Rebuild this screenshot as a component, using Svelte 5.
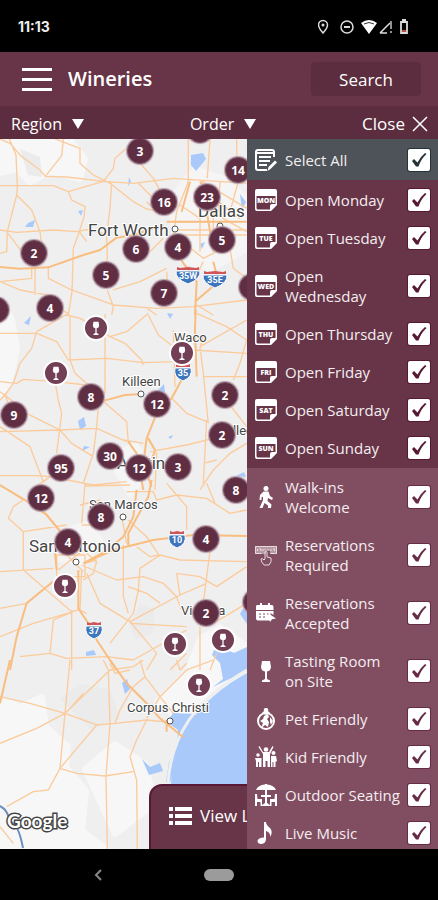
<script>
  const days = [
    { label: 'Open Monday', day: 'MON' },
    { label: 'Open Tuesday', day: 'TUE' },
    { label: 'Open Wednesday', day: 'WED' },
    { label: 'Open Thursday', day: 'THU' },
    { label: 'Open Friday', day: 'FRI' },
    { label: 'Open Saturday', day: 'SAT' },
    { label: 'Open Sunday', day: 'SUN' }
  ];

  const features = [
    { label: 'Walk-ins Welcome', icon: 'walk' },
    { label: 'Reservations Required', icon: 'tap' },
    { label: 'Reservations Accepted', icon: 'booking' },
    { label: 'Tasting Room on Site', icon: 'glass' },
    { label: 'Pet Friendly', icon: 'pet' },
    { label: 'Kid Friendly', icon: 'kids' },
    { label: 'Outdoor Seating', icon: 'outdoor' },
    { label: 'Live Music', icon: 'music' }
  ];

  // Pin positions are measured from the top left of the map
  const clusters = [
    { x: 200, y: -9, n: '' },
    { x: 140, y: 12, n: 3 },
    { x: 238, y: 31, n: 14 },
    { x: 164, y: 63, n: 16 },
    { x: 207, y: 58, n: 23 },
    { x: 34, y: 114, n: 2 },
    { x: 136, y: 110, n: 6 },
    { x: 178, y: 108, n: 4 },
    { x: 222, y: 101, n: 5 },
    { x: 106, y: 136, n: 5 },
    { x: 164, y: 154, n: 7 },
    { x: 252, y: 148, n: '' },
    { x: -4, y: 171, n: '' },
    { x: 50, y: 169, n: 4 },
    { x: 91, y: 258, n: 8 },
    { x: 157, y: 265, n: 12 },
    { x: 225, y: 256, n: 2 },
    { x: 14, y: 276, n: 9 },
    { x: 222, y: 296, n: 2 },
    { x: 110, y: 317, n: 30 },
    { x: 61, y: 329, n: 95 },
    { x: 139, y: 329, n: 12 },
    { x: 178, y: 328, n: 3 },
    { x: 236, y: 351, n: 8 },
    { x: 41, y: 359, n: 12 },
    { x: 101, y: 378, n: 8 },
    { x: 68, y: 403, n: 4 },
    { x: 206, y: 400, n: 4 },
    { x: 206, y: 474, n: 2 },
    { x: 256, y: 463, n: '' }
  ];

  const wineries = [
    { x: 96, y: 189 },
    { x: 56, y: 234 },
    { x: 182, y: 214 },
    { x: 65, y: 447 },
    { x: 175, y: 505 },
    { x: 223, y: 501 },
    { x: 199, y: 546 }
  ];

  const cities = [
    { name: 'Dallas', x: 198, y: 78, big: true },
    { name: 'Fort Worth', x: 88, y: 97, big: true },
    { name: 'Waco', x: 174, y: 203 },
    { name: 'Killeen', x: 122, y: 247 },
    { name: 'College Station', x: 217, y: 296 },
    { name: 'Austin', x: 117, y: 330, big: true },
    { name: 'San Marcos', x: 89, y: 370 },
    { name: 'San Antonio', x: 29, y: 413, big: true },
    { name: 'Victoria', x: 181, y: 476 },
    { name: 'Corpus Christi', x: 127, y: 573 }
  ];

  const dots = [[175, 90], [220, 87], [141, 255], [123, 378], [76, 423], [170, 582]];

  const shields = [
    { x: 188, y: 136, n: '35W', wide: true },
    { x: 215, y: 140, n: '35E', wide: true },
    { x: 183, y: 233, n: '35' },
    { x: 177, y: 400, n: '10' },
    { x: 94, y: 491, n: '37' }
  ];

  // The map is drawn in four sheets at three units per pixel
  const sheets = [
    {
      top: -4,
      roads:
        'M28 12 48 60 52 155 50 180 22 290 20 350 0 355 M0 12 30 25 62 62 120 105 136 124 200 126 310 139 M0 152H160L205 170 310 139 M165 12 240 40V85L280 120 330 145 400 200 440 222 460 226 M190 12 185 62 136 124 M205 170 215 195 255 215 252 245 238 290 220 340 216 470 205 540 M380 40 345 70 340 100 310 139 M335 145 330 220 320 300 322 370 318 420 M425 90 460 130 485 175 M310 139 400 145 520 130 740 145 M415 145 460 190 M565 12V140L530 230 520 300 M630 12 622 130 M710 12 712 150 690 230 M50 180 95 225 120 290 125 330 M0 285 50 292 160 285 230 290 260 284 320 297 M105 400V480M95 400V430L0 440 M60 465 170 485 M0 440 60 465 M145 397V430L215 465 340 510 470 520 580 515 740 495 M322 465 340 515 335 540 M340 465 420 440 500 400 M450 350 490 310 M440 200 480 240 M238 290 260 320 M20 290 80 370 100 390 M600 135 740 220 M580 200 740 290 M600 250V350M640 220V320M660 140 655 230 M550 300H740M520 260H700M520 285H740 M540 210 600 250 M690 340 700 400 740 430 M610 380 590 420 M440 520 470 540 M500 410 502 440 M590 510 640 540 M560 330 610 370 690 330',
      major:
        'M0 396 60 401 145 397 250 360 300 345 350 308 400 300 490 270 M500 260H740 M570 140 545 230 M530 300 540 370 590 440 585 540 M640 380 655 440 585 500 M622 240 640 350 M600 140 640 190 720 250'
    },
    {
      top: 171,
      roads:
        'M0 70H110L170 95 205 150 320 145 430 158 520 155 540 80 M110 65 95 115 60 160 40 220 15 255 0 270 M110 65 205 10 M205 10 185 0M210 20V150L225 190 265 225 295 290 290 350 280 430 250 520 M315 12V250M330 80 300 60 240 25 200 15 M330 80 380 65 445 10 M330 80 375 100 425 150 430 165 M445 15 475 75 520 110 580 120 740 130 M520 60 525 230 M610 200H740 M590 10 680 50 740 90 M740 30 600 110 M600 110 610 190 625 340 M610 80 600 115 M0 215 50 220 70 208 165 215 260 225 M15 250 30 300 M165 215 175 270 185 310 170 430 M80 310 140 340 180 360 290 355 380 395 M0 365 180 360 215 400 280 440 M0 350 90 410 130 515 M130 515 150 500 280 525 380 515 M0 497H120L190 505 M305 270 340 300 380 335 385 400 M515 265 560 310 620 335 M620 330 610 520 M690 285 740 350 M430 400 370 390 M450 425 560 405 640 385 M740 400 690 430 640 480 600 540 M610 460 650 450 M130 515 90 540 M640 340 740 360 M440 380 470 430 465 540 M0 245 60 290 M700 210 720 160 740 90',
      major:
        'M587 0 585 60 590 200 M550 200 515 265 M515 265 460 290 470 310 440 385 430 460 455 530 M313 272 375 255 430 252 M385 395 410 430 430 540 M445 385 465 420 440 500'
    },
    {
      top: 341,
      roads:
        'M255 12 260 18 390 15 M0 15 70 60 M70 60 40 80 25 115 70 155 200 135 M70 155V270L215 395 235 390 M130 90 180 155 M255 12 245 130 M300 120V135H245 M380 35H460L470 60 530 45 620 55 690 100 740 90 M530 45 500 10 M530 45 560 80V150M620 10 645 70 M240 75 300 60 M385 120 440 170 480 230 M370 195V350L385 400 M365 110 380 190 M480 225 420 265 415 330 400 400 330 490 M245 255 350 300 430 290 490 310 530 350 540 380 M480 225 540 240 740 245 M630 215 620 290 610 370 M410 200 450 230 480 225 M530 280 540 345 M530 280 600 290 650 320 740 260 M540 345 390 425 470 520 440 570 M540 345 620 310 M0 385 80 370 170 295 M0 275 160 265 M220 395 160 420 150 520 M0 470 100 430 220 395 M260 280 300 370 390 425 M215 390V570M60 530 150 520 200 535 320 530 400 540 M560 450 400 540 M390 430 560 440 M600 440V570M560 520 510 570 M640 430 740 370 M540 385 590 390 M650 520 630 570 M260 400 240 390 245 270 M170 225H255V290H170ZM180 205 250 275M175 270 250 210M255 250 290 240 M260 220 290 245 280 280 250 300 M385 320 440 340 480 370',
      major:
        'M0 15 75 60 140 105 190 165 M250 250 315 215 370 170 400 110 410 30 M250 250 340 210 460 180 580 165 740 168 M455 0 445 50 385 160V200 M235 270V385L265 430 290 480 350 570 M165 300 80 370 50 470 30 570 M170 270 165 220'
    },
    {
      top: 521,
      roads:
        'M0 110 90 130 195 160 290 195 345 190 440 180 520 188 M210 0 195 160 180 325 145 390 100 395 20 440 M195 160 330 30 400 20 430 0 M195 160 110 205 0 250 M290 195 235 260 180 325 M180 325 230 340 315 348 400 335 M325 30 330 190 318 348 322 570 M440 180 410 240 390 290 410 360 412 570 M310 0 325 30 M330 10 345 40 390 30 M420 0 435 50 400 80 360 150 345 190 M435 50 480 110 520 160 M640 0 560 30 480 110 440 175 M530 0 540 30 M560 10 540 30 M0 500 40 550 M250 100 210 145',
      major: 'M330 0 380 70 440 130 480 175 550 232 M500 180V215 M30 0 0 130'
    }
  ];
</script>

{#snippet wineGlass()}
  <path d="M7 1h8l1 6q-.3 4-4 4.500V19l3 1.500V22H7v-1.500L10 19v-7.500Q6.300 11 6 7Z" />
{/snippet}

{#snippet icon(name, day)}
  <svg class="row-icon" viewBox="0 0 22 22" aria-hidden="true">
    {#if name === 'day'}
      <path d="M2 0h18q2 0 2 2v14l-6 6H2q-2 0-2-2V2Q0 0 2 0Zm-.500 7v12q0 1.500 1.500 1.500h12V17q0-2 2-2h3.500V7Z" fill-rule="evenodd" />
      <path d="M17 20.500V16h4Z" />
      <text x="11" y="14">{day}</text>
    {:else if name === 'list'}
      <path d="M19 8V3q0-2-2-2H3Q1 1 1 3v16q0 2 2 2h9M1 4h18" class="line" />
      <path d="M4 8h12M4 12h11M4 16h8" class="line" />
      <path d="m12.500 22 1-4 6.500-6.500 2 2L15.500 20Z" />
    {:else if name === 'walk'}
      <circle cx="11" cy="2.500" r="2.500" />
      <path d="M8.500 5.500h5l1.500 4.500 3 2-1 2-4-2-.500 3 4 3.500-.500 3.500h-3v-2.500l-3.500-2.500-2 5H4.500L8 14V10.500l-1.500 1V14h-2l.500-5Z" />
    {:else if name === 'tap'}
      <g opacity=".8">
        <path d="M0 2h22v8h-7V7h-4v3H0Z" opacity=".55" />
        <path d="M.500 2.500h21v7h-6M6.500 9.500h-6v-7M2.500 5v2m2-2h1.500v2m2-2v2m2-2v1m3-1v1m3-1v2m2-2h1.500v2" class="thin" />
        <path d="M10 15V8q1.500-1.500 2 0v5l4 1q1 4-2 7H9q-3-3-3-6 2-1 3 1l1-1" class="thin" />
      </g>
    {:else if name === 'booking'}
      <path d="M2 3h3V1h2v2h6V1h2v2h2q1.500 0 1.500 2v3H1V5Q1 3 2 3Z" />
      <path d="M1 9h17.500v4l-3-2v7.500H3q-2 0-2-2Z" />
      <path d="M4 12h2m2 0h2m2 0h2M4 15h2m2 0h2" class="cut" />
      <path d="m13 11 8 5.500-4 .700L15 20Z" />
    {:else if name === 'glass'}
      {@render wineGlass()}
    {:else if name === 'pet'}
      <circle cx="11" cy="13" r="8" class="line" />
      <path d="m7 5 2-2q-1-3 2-3t2 3l2 2-4 2Z" />
      <path d="m9 8 4-2 1 3-2 2 2 3-1 5-3-2-4 3 2-5-3-2 3-2Z" />
      <path d="m15 9 3 4-2 4-1-3Z" />
    {:else if name === 'kids'}
      <circle cx="11" cy="3.500" r="2.300" />
      <circle cx="3" cy="9" r="1.800" />
      <circle cx="18.500" cy="7" r="2" />
      <path d="m4.500 0 3.500 6h6L17.500 0l1 1L15 8v13h-2.500v-6h-2v6H8V8L3.500 1Z" />
      <path d="M0 12h6.500v9H4v-5H3v5H1v-6ZM16 10h5l1 5-1.500 1v5h-2v-5h-1v5H16Z" />
    {:else if name === 'outdoor'}
      <path d="M1 6q2-5 9-5.500V0h2v.500q7 .500 9 5.500Z" />
      <path d="M10 6h2v5h4v2h-4v6l3 2v1H7v-1l3-2v-6H6v-2h4Z" />
      <path d="M0 10h2l.500 5H7v7H5.500v-4H2v4H0ZM22 10h-2l-.500 5H15v7h1.500v-4H20v4h2Z" />
    {:else}
      <path d="M9 0h2q0 3 4 6 3 3 .500 9-.500-5-4.500-6v8.500q-.500 4-4.500 4.500-4 0-4-3 .500-3.500 6.500-3.500Z" />
    {/if}
  </svg>
{/snippet}

{#snippet option(label, name, day)}
  <label class="option">
    {@render icon(name, day)}
    <span class="option-label">{label}</span>
    <span class="check">
      <input type="checkbox" checked />
      <svg viewBox="0 0 22 22" aria-hidden="true"><path d="m4 12 2-2 3.500 3.500Q12 8 17 4l1.500 1Q13 10 10.500 17.500H8Z" /></svg>
    </span>
  </label>
{/snippet}

<div class="app">
  <div class="status">
    <span class="time">11:13</span>
    <svg width="92" height="16" viewBox="0 0 92 16" aria-hidden="true">
      <g fill="none" stroke="#ddd" stroke-width="1.500">
        <path d="M5 14Q.500 9 .500 6a4.500 4.500 0 0 1 9 0q0 3-4.500 8Z" />
        <circle cx="29" cy="8" r="6" />
        <path d="M26 8h6" stroke-width="2" />
        <path d="m62 14 10-10M62 14h7" />
        <path d="M73 2v8m0 2v2" stroke-width="1.300" />
        <path d="M83 3h6v11h-6Z" stroke-width="1.800" />
      </g>
      <path d="M43 4q8-6 16 0l-8 11Z" fill="#fff" />
      <path d="M46 5q5-3 10 0" fill="none" stroke="#333" />
      <circle cx="5" cy="6" r="1.500" fill="#ddd" />
      <path d="M84 0h4v3h-4Z" fill="#ddd" />
      <path d="M84 11h4v2h-4Z" fill="#b5533f" />
    </svg>
  </div>

  <header class="header">
    <button class="menu" aria-label="Menu"><span></span><span></span><span></span></button>
    <h1>Wineries</h1>
    <button class="search">Search</button>
  </header>

  <nav class="filters">
    <button>Region <svg width="12" height="10" viewBox="0 0 12 10" aria-hidden="true"><path d="M0 0h12L6 10Z" /></svg></button>
    <button>Order <svg width="12" height="10" viewBox="0 0 12 10" aria-hidden="true"><path d="M0 0h12L6 10Z" /></svg></button>
    <button class="close">Close <svg width="16" height="16" viewBox="0 0 16 16" aria-hidden="true"><path d="m1 1 14 14M15 1 1 15" /></svg></button>
  </nav>

  <main class="stage">
    <svg class="map" width="438" height="710" viewBox="0 0 438 710" aria-hidden="true">
      <g class="light">
        <path d="M0 0h70l15 20-5 20-30-8-20 12-12-14-18 4ZM0 160l12 20 5 30-8 35-9 10ZM0 560l20 8 22-10 4 30 22 20-2 20 20 24-4 40 24 18H0ZM200 500l20-12 27 20v30l-30 10-40 30-20-15 30-30ZM85 630l30-25 30 20 10 40-40 30Z" />
        <path d="M170 60l25-30 30 10 22 20v50l-35 20-34-10ZM110 320l25-15 15 25-20 25ZM60 395l25-10 15 15-15 25-25-5Z" opacity=".8" />
      </g>
      <g fill="#ebebeb">
        <path d="M140 465l15 5-2 25-18 5-5-15ZM60 560l20-15 30 5 10 30-30 10ZM20 10l20 8 2 20-14-2Z" />
      </g>
      <g fill="#a9c9fb">
        <path d="M171 645Q172 610 190 583 212 553 247 534L438 400V645Z" />
        <path d="M166 643l3-20 8-15 1-17-11-8 6-9 20 1 9 3-12 16-15 30-5 20ZM213 548l10-8-3-16-8-8 4-10 18 8 13-6v24l-22 10ZM142 620l8 8 10-4 3 8-14 4ZM240 475l7-12v22ZM122 544l5-4 3 10-5 5Z" />
        <path d="M191 16l12-2 3 6-10 12-5-6ZM129 38l2 5-3 4ZM28 84l7-3-2 7-8 0ZM27 181l4-4-2 9-5-2ZM78 282l6-4 2 9-6 4ZM84 307l6 1-8 4ZM167 174l6 1-3 5ZM168 298l5-2-2 4ZM190 286l6 2ZM236 337l8-4 2 5ZM86 513l8-2 2 5-10 1ZM157 252l7-7 1 8-6 4ZM60 48l4 2ZM78 72l5-1-2 6ZM240 55l6 8-4 8ZM200 105l5-2-3 7Z" />
      </g>
      <path d="M168 645q2-36 21-64 20-28 58-50" class="island" />
      {#each sheets as sheet}
        <g transform="translate(0 {sheet.top}) scale(.3333)">
          <path d={sheet.roads} class="road" />
          <path d={sheet.major} class="road major" />
        </g>
      {/each}
      <path d="M0 667q8 4 10 16 8 0 13 26" class="river" />
      {#each shields as s}
        <g transform="translate({s.x} {s.y})">
          <path d={s.wide ? 'M-12-4h24q1 8-12 13Q-13 4-12-4Z' : 'M-8-4H8Q10 5 0 9-10 5-8-4Z'} class="shield" />
          <path d={s.wide ? 'M-11-8l3 1 8-1 8 1 3-1v3h-22Z' : 'M-7-8l3 1 4-1 4 1 3-1v3H-7Z'} class="shield-top" />
          <text y="4" class="shield-text">{s.n}</text>
        </g>
      {/each}
      {#each cities as city}
        <text x={city.x} y={city.y} class="city" class:big={city.big}>{city.name}</text>
      {/each}
      {#each dots as [x, y]}
        <circle cx={x} cy={y} r="3" class="dot" />
      {/each}
      <text x="7" y="689" class="google">Google</text>
    </svg>

    {#each wineries as pin}
      <button class="pin winery" style="left: {pin.x}px; top: {pin.y}px" aria-label="Winery">
        <svg width="14" height="14" viewBox="0 0 22 22" aria-hidden="true">{@render wineGlass()}</svg>
      </button>
    {/each}
    {#each clusters as pin}
      <button class="pin cluster" style="left: {pin.x}px; top: {pin.y}px" aria-label="Winery group">{pin.n}</button>
    {/each}

    <button class="view-list">
      <svg width="23" height="18" viewBox="0 0 23 18" aria-hidden="true">
        <path d="M0 0h4v4H0Zm6 0h17v4H6ZM0 7h4v4H0Zm6 0h17v4H6ZM0 14h4v4H0Zm6 0h17v4H6Z" />
      </svg>
      View List
    </button>

    <aside class="panel">
      <div class="all">{@render option('Select All', 'list')}</div>
      <div class="days">
        {#each days as d}
          {@render option(d.label, 'day', d.day)}
        {/each}
      </div>
      <div class="features">
        {#each features as f}
          {@render option(f.label, f.icon)}
        {/each}
      </div>
    </aside>
  </main>

  <div class="system-nav">
    <button aria-label="Back"><svg width="8" height="12" viewBox="0 0 8 12" aria-hidden="true"><path d="M7 1 2 6l5 5" /></svg></button>
    <button class="home" aria-label="Home"></button>
  </div>
</div>

<style>
  :global(body) {
    margin: 0;
    background: #000;
  }

  .app {
    display: flex;
    flex-direction: column;
    height: 100vh;
    overflow: hidden;
    font-family: 'Open Sans', 'Noto Sans', sans-serif;
    color: #fff;
  }

  button {
    margin: 0;
    padding: 0;
    border: 0;
    background: none;
    color: inherit;
    font: inherit;
    cursor: pointer;
  }

  .status {
    display: flex;
    flex: none;
    align-items: center;
    justify-content: space-between;
    height: 52px;
    padding: 2px 28px 0 18px;
    box-sizing: border-box;
    background: #000;
  }

  .time {
    font: 700 14px/20px Inter, sans-serif;
    color: #eee;
  }

  .header {
    display: flex;
    flex: none;
    align-items: center;
    height: 54px;
    padding: 0 17px 0 22px;
    box-sizing: border-box;
    background: #673547;
  }

  .menu {
    display: flex;
    flex-direction: column;
    gap: 7px;
    width: 30px;
  }

  .menu span {
    height: 3px;
    background: #fff;
  }

  h1 {
    flex: 1;
    margin: 0 0 0 16px;
    font-size: 20px;
    font-weight: 600;
    line-height: 24px;
  }

  .search {
    width: 110px;
    height: 34px;
    border-radius: 4px;
    background: #5c2d3e;
    font-size: 17px;
  }

  .filters {
    display: flex;
    flex: none;
    align-items: center;
    justify-content: space-between;
    height: 33px;
    padding: 2px 10px 0 11px;
    box-sizing: border-box;
    background: #5c2d3e;
  }

  .filters button {
    display: flex;
    align-items: center;
    gap: 10px;
    font-size: 16px;
    line-height: 24px;
  }

  .filters path {
    fill: #fff;
  }

  .filters .close {
    gap: 7px;
    font-size: 17px;
  }

  .filters .close path {
    fill: none;
    stroke: #fff;
    stroke-width: 1.5;
  }

  .stage {
    position: relative;
    flex: 1;
    min-height: 0;
    overflow: hidden;
    background: #efefef;
  }

  .map {
    display: block;
  }

  .light {
    fill: #f7f7f7;
    stroke: #f7f7f7;
    stroke-width: 6;
    stroke-linejoin: round;
  }

  .road {
    fill: none;
    stroke: #fbcb9c;
    stroke-width: 4;
    stroke-linejoin: round;
  }

  .road.major {
    stroke: #f9bd80;
    stroke-width: 6;
  }

  .island {
    fill: none;
    stroke: #eef0f0;
    stroke-width: 3;
  }

  .river {
    fill: none;
    stroke: #6d8fc0;
    stroke-width: 2;
  }

  .shield {
    fill: #3d76bd;
    stroke: #fff;
  }

  .shield-top {
    fill: #d0555a;
  }

  .shield-text {
    fill: #fff;
    font: 700 9px Roboto, sans-serif;
    text-anchor: middle;
  }

  .city {
    fill: #444;
    stroke: #fff;
    stroke-width: 2;
    paint-order: stroke;
    font: 400 13px Roboto, sans-serif;
  }

  .city.big {
    font-size: 17px;
  }

  .dot {
    fill: #fff;
    stroke: #555;
  }

  .google {
    fill: #fff;
    stroke: #444;
    stroke-width: 3;
    paint-order: stroke;
    font: 700 19px Lato, sans-serif;
  }

  .pin {
    position: absolute;
    display: flex;
    align-items: center;
    justify-content: center;
    width: 26px;
    height: 26px;
    box-sizing: border-box;
    border-radius: 50%;
    transform: translate(-50%, -50%);
    font-size: 12px;
    font-weight: 700;
  }

  .cluster {
    border: 1px solid #7c5265;
    background: #5f2e42;
    box-shadow: 0 0 1px 1px #b79eaa;
  }

  .winery {
    border: 2px solid #fff;
    background: #733f55;
  }

  .winery svg {
    fill: #fff;
  }

  .view-list {
    position: absolute;
    bottom: 0;
    left: 50%;
    display: flex;
    align-items: center;
    gap: 8px;
    width: 140px;
    height: 65px;
    padding: 0 0 4px 18px;
    box-sizing: border-box;
    border: 2px solid #571836;
    border-bottom: 0;
    border-radius: 13px 13px 0 0;
    background: #673547;
    transform: translateX(-50%);
    font-size: 17px;
    white-space: nowrap;
  }

  .view-list svg {
    flex: none;
    fill: #fff;
  }

  .panel {
    position: absolute;
    top: 0;
    right: 0;
    bottom: 0;
    width: 191px;
    overflow-y: auto;
    scrollbar-width: none;
    background: #814d60;
  }

  .all {
    padding: 2px 0 1px;
    background: #4d5358;
    --mark: #26343a;
  }

  .days {
    padding: 1px 0;
    background: #673547;
    --mark: #571836;
  }

  .features {
    --mark: #672a47;
  }

  .option {
    display: grid;
    grid-template-columns: 22px 1fr 22px;
    align-items: center;
    padding: 9px 8px;
    cursor: pointer;
  }

  .option-label {
    margin-left: 8px;
    padding-right: 7px;
    font-size: 15px;
    line-height: 20px;
    color: #f4eef1;
  }

  .row-icon {
    width: 22px;
    height: 22px;
    margin: -1px 0;
    fill: #fff;
  }

  .row-icon text {
    font: 800 7px 'Open Sans', sans-serif;
    text-anchor: middle;
  }

  .row-icon .line {
    fill: none;
    stroke: #fff;
    stroke-width: 2;
  }

  .row-icon .thin {
    fill: none;
    stroke: #fff;
  }

  .row-icon .cut {
    fill: none;
    stroke: #814d60;
  }

  .check {
    display: grid;
    margin: -1px 0;
  }

  .check input,
  .check svg {
    grid-area: 1 / 1;
    width: 22px;
    height: 22px;
  }

  .check input {
    appearance: none;
    margin: 0;
    border-radius: 2px;
    background: #fff;
    box-shadow: 0 0 0 1px var(--mark);
  }

  .check svg {
    display: none;
    fill: var(--mark);
    pointer-events: none;
  }

  .check input:checked + svg {
    display: block;
  }

  .system-nav {
    display: grid;
    flex: none;
    grid-template-columns: 1fr 1fr 30px 2fr;
    align-items: center;
    height: 51px;
    box-sizing: border-box;
    background: #000;
  }

  .system-nav button:first-child {
    grid-column: 1;
    justify-self: end;
  }

  .system-nav path {
    fill: none;
    stroke: #888;
    stroke-width: 2;
  }

  .system-nav .home {
    grid-column: 3;
    width: 30px;
    height: 12px;
    border-radius: 6px;
    background: #9b9b9b;
  }
</style>
